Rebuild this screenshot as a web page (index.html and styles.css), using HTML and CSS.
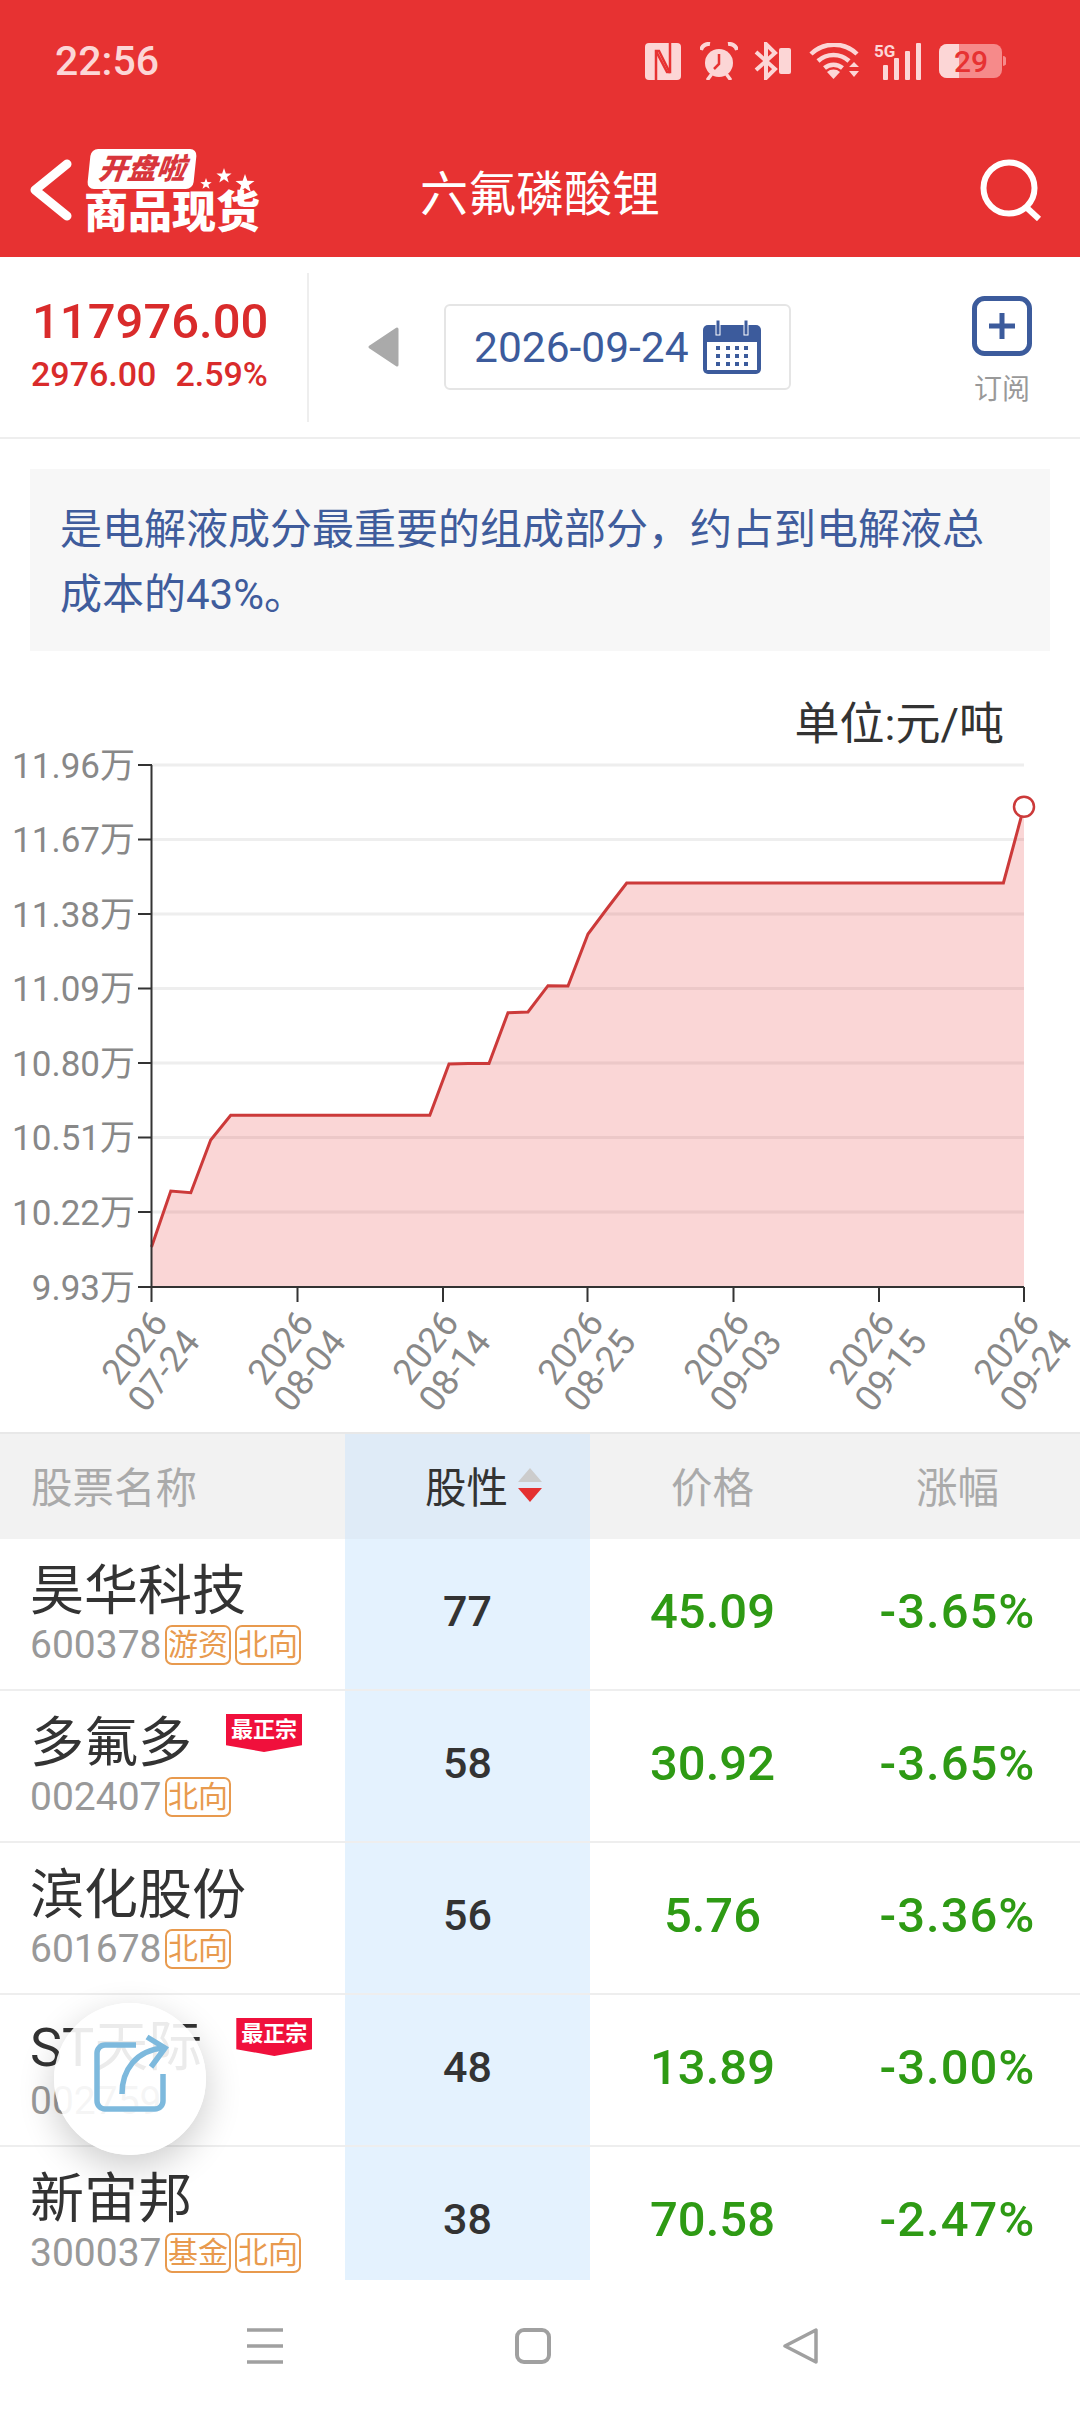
FILE: index.html
```html
<!DOCTYPE html>
<html lang="zh-CN">
<head>
    <meta charset="UTF-8">
    <meta name="viewport" content="width=device-width, initial-scale=1.0">
    <title>六氟磷酸锂</title>
    <link rel="stylesheet" href="styles.css">
</head>
<body>
<div class="page">
    <header class="topbar">
        <div class="status">
            <span class="clock">22:56</span>
            <div class="status-icons">
                <!-- NFC -->
                <svg width="36" height="37" viewBox="0 0 36 37">
                    <rect width="36" height="37" rx="4" fill="#fcd6d6"/>
                    <path d="M11 37V8h3l11 22" fill="none" stroke="#e73232" stroke-width="2.500"/>
                    <path d="M25 0v29h-3L11 8" fill="none" stroke="#e73232" stroke-width="2.500"/>
                </svg>
                <!-- alarm -->
                <svg class="ic-alarm" width="38" height="38" viewBox="0 0 38 38">
                    <circle cx="19" cy="21" r="14" fill="#fcd6d6"/>
                    <path d="M19 12v10l-5 5" fill="none" stroke="#e73232" stroke-width="2.500"/>
                    <path d="M1 8a8 8 0 0 1 9-6M37 8a8 8 0 0 0-9-6" fill="none" stroke="#fcd6d6" stroke-width="4"/>
                    <path d="M8 37l3-4M30 37l-3-4" stroke="#fcd6d6" stroke-width="3.500" stroke-linecap="round"/>
                </svg>
                <!-- bluetooth -->
                <svg class="ic-bt" width="37" height="38" viewBox="0 0 37 38">
                    <path d="M2 10l19 17-9 9V2l9 9L2 28" fill="none" stroke="#fcd6d6" stroke-width="4"/>
                    <rect x="25" y="6" width="12" height="26" rx="2" fill="#fcd6d6"/>
                </svg>
                <!-- wifi -->
                <svg class="ic-wifi" width="52" height="36" viewBox="0 0 52 36">
                    <path d="M2 11a33 33 0 0 1 46 0" fill="none" stroke="#fcd6d6" stroke-width="4.500"/>
                    <path d="M9 18a23 23 0 0 1 31 0" fill="none" stroke="#fcd6d6" stroke-width="4.500"/>
                    <path d="M15.500 25a14 14 0 0 1 18 0" fill="none" stroke="#fcd6d6" stroke-width="4.500"/>
                    <path d="M18 29a10 10 0 0 1 13 0l-6.500 7z" fill="#fcd6d6"/>
                    <path d="M40 24l5-5 5 5zM40 28h10l-5 6z" fill="#fcd6d6"/>
                </svg>
                <!-- signal -->
                <svg class="ic-signal" width="48" height="38" viewBox="0 0 48 38">
                    <text class="ic-text" x="0" y="15" font-size="17">5G</text>
                    <rect x="9" y="23" width="5" height="15" rx="1" fill="#fcd6d6"/>
                    <rect x="20" y="16" width="5" height="22" rx="1" fill="#fcd6d6"/>
                    <rect x="31" y="9" width="5" height="29" rx="1" fill="#fcd6d6"/>
                    <rect x="42" y="1" width="5" height="37" rx="1" fill="#fcd6d6"/>
                </svg>
                <!-- battery -->
                <svg class="ic-batt" width="67" height="34" viewBox="0 0 67 34">
                    <rect width="63" height="34" rx="8" fill="#f68a8a"/>
                    <path d="M8 0h12v34H8a8 8 0 0 1-8-8V8a8 8 0 0 1 8-8z" fill="#fcd6d6"/>
                    <path d="M64 12a4 5 0 0 1 0 10z" fill="#f68a8a"/>
                    <text class="ic-num" x="32" y="28" font-size="30" text-anchor="middle">29</text>
                </svg>
            </div>
        </div>
        <nav class="nav">
            <div class="nav-left">
                <svg class="nav-back" width="42" height="62" viewBox="0 0 42 62">
                    <path d="M37 5L5 31l32 26" fill="none" stroke="#fff" stroke-width="9" stroke-linecap="round" stroke-linejoin="round"/>
                </svg>
                <div class="logo">
                    <span class="logo-top"><span class="logo-top-text">开盘啦</span></span>
                    <span class="logo-bottom">商品现货</span>
                    <svg class="logo-stars" width="56" height="32" viewBox="0 0 56 32">
                        <path d="M0-1L.235-.324.951-.309.38.124.588.809 0 .4-.588.809-.38.124-.951-.309-.235-.324Z" transform="translate(6 19) scale(6)" fill="#fff"/>
                        <path d="M0-1L.235-.324.951-.309.38.124.588.809 0 .4-.588.809-.38.124-.951-.309-.235-.324Z" transform="translate(24 11) scale(8)" fill="#fff"/>
                        <path d="M0-1L.235-.324.951-.309.38.124.588.809 0 .4-.588.809-.38.124-.951-.309-.235-.324Z" transform="translate(45 19) scale(10)" fill="#fff"/>
                    </svg>
                </div>
            </div>
            <h1 class="nav-title">六氟磷酸锂</h1>
            <svg class="nav-search" width="62" height="62" viewBox="0 0 62 62">
                <circle cx="29" cy="29" r="25.500" fill="none" stroke="#fff" stroke-width="6"/>
                <path d="M46 48l13 12" stroke="#fff" stroke-width="6"/>
            </svg>
        </nav>
    </header>

    <section class="quote">
        <div class="quote-price">
            <div class="quote-now">117976.00</div>
            <div class="quote-diff"><span>2976.00</span><span>2.59%</span></div>
        </div>
        <svg class="date-prev" width="31" height="40" viewBox="0 0 31 40">
            <path d="M29 2v36L2 20z" fill="#aaa" stroke="#aaa" stroke-width="3" stroke-linejoin="round"/>
        </svg>
        <div class="date-box">
            <span class="date-text">2026-09-24</span>
            <svg width="58" height="54" viewBox="0 0 58 54">
                <rect y="5" width="58" height="49" rx="5" fill="#3c5b9c"/>
                <rect x="4" y="22" width="50" height="28" fill="#fff"/>
                <rect x="13" y="0" width="4" height="15" fill="#3c5b9c" stroke="#fff" stroke-width="1"/>
                <rect x="41" y="0" width="4" height="15" fill="#3c5b9c" stroke="#fff" stroke-width="1"/>
                <path d="M13 26h4v4h-4zM23 26h4v4h-4zM32 26h4v4h-4zM41 26h4v4h-4zM13 34h4v4h-4zM23 34h4v4h-4zM32 34h4v4h-4zM41 34h4v4h-4zM13 42h4v4h-4zM23 42h4v4h-4zM32 42h4v4h-4zM41 42h4v4h-4z" fill="#3c5b9c"/>
            </svg>
        </div>
        <div class="subscribe">
            <svg width="60" height="60" viewBox="0 0 60 60">
                <rect x="2.500" y="2.500" width="55" height="55" rx="10" fill="none" stroke="#3c5b9c" stroke-width="5"/>
                <path d="M30 17v26M17 30h26" stroke="#3c5b9c" stroke-width="5"/>
            </svg>
            <span>订阅</span>
        </div>
    </section>

    <p class="note">是电解液成分最重要的组成部分，约占到电解液总成本的43%。</p>

    <div class="unit">单位:元/吨</div>

    <svg class="chart" width="1080" height="691" viewBox="0 741 1080 691">
        <g class="grid">
            <path d="M152 765H1024M152 839.500H1024M152 914H1024M152 988.500H1024M152 1063H1024M152 1137.500H1024M152 1212H1024"/>
        </g>
        <path class="area" d="M151.500 1247L170.800 1191L190.800 1192.700L210.700 1140L230.700 1115.300L429.800 1115.300L449 1064L468 1063.500L489 1063.500L508 1012.700L528 1012L548 985.700L568 986L588 934L607.500 908L626.700 883L1003.400 883L1024 806.700V1287H151.500Z"/>
        <path class="line" d="M151.500 1247L170.800 1191L190.800 1192.700L210.700 1140L230.700 1115.300L429.800 1115.300L449 1064L468 1063.500L489 1063.500L508 1012.700L528 1012L548 985.700L568 986L588 934L607.500 908L626.700 883L1003.400 883L1024 806.700"/>
        <circle class="dot" cx="1024" cy="806.700" r="10"/>
        <path class="axis" d="M151.500 765V1302M138 765h14M138 839.500h14M138 914h14M138 988.500h14M138 1063h14M138 1137.500h14M138 1212h14M138 1287H1024M297.500 1287v15M443 1287v15M587.500 1287v15M733.500 1287v15M879 1287v15M1024 1287v15"/>
        <g class="y-labels">
            <text x="135" y="778">11.96万</text>
            <text x="135" y="852">11.67万</text>
            <text x="135" y="927">11.38万</text>
            <text x="135" y="1001">11.09万</text>
            <text x="135" y="1076">10.80万</text>
            <text x="135" y="1150">10.51万</text>
            <text x="135" y="1225">10.22万</text>
            <text x="135" y="1300">9.93万</text>
        </g>
        <g class="x-labels">
            <g transform="translate(149 1359) rotate(-52)"><text y="-6">2026</text><text y="31">07-24</text></g>
            <g transform="translate(295 1359) rotate(-52)"><text y="-6">2026</text><text y="31">08-04</text></g>
            <g transform="translate(440 1359) rotate(-52)"><text y="-6">2026</text><text y="31">08-14</text></g>
            <g transform="translate(585 1359) rotate(-52)"><text y="-6">2026</text><text y="31">08-25</text></g>
            <g transform="translate(731 1359) rotate(-52)"><text y="-6">2026</text><text y="31">09-03</text></g>
            <g transform="translate(876 1359) rotate(-52)"><text y="-6">2026</text><text y="31">09-15</text></g>
            <g transform="translate(1021 1359) rotate(-52)"><text y="-6">2026</text><text y="31">09-24</text></g>
        </g>
    </svg>

    <section class="table">
        <div class="thead">
            <div class="th th-name">股票名称</div>
            <div class="th th-sort">股性
                <svg width="24" height="34" viewBox="0 0 24 34">
                    <path d="M12 0l12 14H0z" fill="#ccc"/>
                    <path d="M0 20h24L12 34z" fill="#e43030"/>
                </svg>
            </div>
            <div class="th">价格</div>
            <div class="th">涨幅</div>
        </div>

        <div class="row">
            <div class="cell-name">
                <div class="name-line"><span class="name">昊华科技</span></div>
                <div class="code-line"><span class="code">600378</span><span class="tag">游资</span><span class="tag">北向</span></div>
            </div>
            <div class="cell-score">77</div>
            <div class="cell-num">45.09</div>
            <div class="cell-num cell-pct">-3.65%</div>
        </div>
        <div class="row">
            <div class="cell-name">
                <div class="name-line"><span class="name">多氟多</span><span class="badge">最正宗</span></div>
                <div class="code-line"><span class="code">002407</span><span class="tag">北向</span></div>
            </div>
            <div class="cell-score">58</div>
            <div class="cell-num">30.92</div>
            <div class="cell-num cell-pct">-3.65%</div>
        </div>
        <div class="row">
            <div class="cell-name">
                <div class="name-line"><span class="name">滨化股份</span></div>
                <div class="code-line"><span class="code">601678</span><span class="tag">北向</span></div>
            </div>
            <div class="cell-score">56</div>
            <div class="cell-num">5.76</div>
            <div class="cell-num cell-pct">-3.36%</div>
        </div>
        <div class="row">
            <div class="cell-name">
                <div class="name-line"><span class="name">ST天际</span><span class="badge">最正宗</span></div>
                <div class="code-line"><span class="code">002759</span></div>
            </div>
            <div class="cell-score">48</div>
            <div class="cell-num">13.89</div>
            <div class="cell-num cell-pct">-3.00%</div>
        </div>
        <div class="row">
            <div class="cell-name">
                <div class="name-line"><span class="name">新宙邦</span></div>
                <div class="code-line"><span class="code">300037</span><span class="tag">基金</span><span class="tag">北向</span></div>
            </div>
            <div class="cell-score">38</div>
            <div class="cell-num">70.58</div>
            <div class="cell-num cell-pct">-2.47%</div>
        </div>
    </section>

    <div class="sysbar">
        <svg width="36" height="36" viewBox="0 0 36 36">
            <path d="M0 2h36M0 18h36M0 34h36" stroke="#a0a0a0" stroke-width="3.500"/>
        </svg>
        <svg width="36" height="36" viewBox="0 0 36 36">
            <rect x="2" y="2" width="32" height="32" rx="7" fill="none" stroke="#a0a0a0" stroke-width="4"/>
        </svg>
        <svg width="36" height="36" viewBox="0 0 36 36">
            <path d="M2 18L33 2v32z" fill="none" stroke="#a0a0a0" stroke-width="3.500" stroke-linejoin="round"/>
        </svg>
    </div>

    <div class="share">
        <svg width="80" height="80" viewBox="0 0 80 80">
            <path d="M46 13H15a8 8 0 0 0-8 8v48a8 8 0 0 0 8 8h50a8 8 0 0 0 8-8V42" fill="none" stroke="#7db9dd" stroke-width="5.500"/>
            <path d="M32 62C32 38 46 18 74 16" fill="none" stroke="#7db9dd" stroke-width="5.500"/>
            <path d="M57 5l18 11-14 19" fill="none" stroke="#7db9dd" stroke-width="5.500"/>
        </svg>
    </div>
</div>
</body>
</html>
```

FILE: styles.css
```css
* {
    box-sizing: border-box;
}
body {
    margin: 0;
    font-family: Roboto, "Noto Sans CJK SC", sans-serif;
    background: #fff;
}
.page {
    position: relative;
    width: 1080px;
    height: 2412px;
    overflow: hidden;
    display: flex;
    flex-direction: column;
}

/* red header */
.topbar {
    height: 257px;
    background: #e73232;
    flex-shrink: 0;
}
.status {
    height: 122px;
    padding: 0 74px 0 55px;
    display: flex;
    align-items: center;
    justify-content: space-between;
}
.clock {
    font-size: 41px;
    font-weight: 500;
    color: #fcd6d6;
}
.status-icons {
    display: flex;
    align-items: center;
}
.ic-alarm {
    margin-left: 19px;
}
.ic-bt {
    margin-left: 16px;
}
.ic-wifi {
    margin-left: 18px;
}
.ic-signal {
    margin-left: 13px;
}
.ic-batt {
    margin-left: 17px;
}
.ic-text {
    font-family: Roboto, sans-serif;
    font-weight: 700;
    fill: #fcd6d6;
}
.ic-num {
    font-family: Roboto, sans-serif;
    font-weight: 500;
    fill: #e73232;
}
.nav {
    height: 135px;
    padding: 0 38px;
    display: grid;
    grid-template-columns: 1fr auto 1fr;
    align-items: center;
}
.nav-left {
    display: flex;
    align-items: center;
}
.nav-back {
    margin-left: -8px;
}
.logo {
    position: relative;
    margin-left: 12px;
    display: flex;
    flex-direction: column;
    align-items: flex-start;
}
.logo-top {
    margin-left: 5px;
    width: 106px;
    height: 40px;
    background: #fff;
    border-radius: 7px;
    transform: skewX(-6deg);
    display: flex;
    align-items: center;
    justify-content: center;
}
.logo-top-text {
    font-size: 29px;
    line-height: 40px;
    font-weight: 900;
    font-style: italic;
    color: #d8363c;
}
.logo-bottom {
    margin-top: 6px;
    font-size: 44px;
    line-height: 36px;
    font-weight: 900;
    color: #fff;
    white-space: nowrap;
}
.logo-stars {
    position: absolute;
    left: 116px;
    top: 16px;
}
.nav-title {
    margin: 0;
    font-size: 48px;
    font-weight: 400;
    color: #fff;
}
.nav-search {
    justify-self: end;
}

/* price and date row */
.quote {
    height: 182px;
    flex-shrink: 0;
    display: flex;
    align-items: center;
    border-bottom: 2px solid #eee;
}
.quote-price {
    width: 309px;
    height: 149px;
    padding: 24px 0 0 31px;
    border-right: 2px solid #eee;
    color: #d92b2b;
}
.quote-now {
    font-size: 49px;
    line-height: 50px;
    font-weight: 500;
    padding-left: 1px;
}
.quote-diff {
    margin-top: 7px;
    font-size: 34px;
    line-height: 40px;
    font-weight: 500;
    display: flex;
    gap: 19px;
}
.date-prev {
    margin-left: 59px;
}
.date-box {
    margin-left: 45px;
    width: 347px;
    height: 86px;
    padding: 0 28px 0 28px;
    border: 2px solid #e5e5e5;
    border-radius: 6px;
    display: flex;
    align-items: center;
    justify-content: space-between;
}
.date-text {
    font-size: 42.500px;
    color: #3c5b9c;
}
.subscribe {
    margin-left: auto;
    padding: 7px 48px 0 0;
    display: flex;
    flex-direction: column;
    align-items: center;
    gap: 18px;
    font-size: 28px;
    line-height: 32px;
    color: #999;
}

/* description */
.note {
    margin: 30px 30px 0;
    height: 182px;
    padding: 28px 30px 0;
    background: #f7f7f7;
    font-size: 42px;
    line-height: 65px;
    color: #3f5c9c;
    flex-shrink: 0;
}
.unit {
    height: 90px;
    padding: 48px 76px 0 0;
    display: flex;
    align-items: center;
    justify-content: flex-end;
    font-size: 45px;
    color: #333;
    flex-shrink: 0;
}

/* chart */
.chart {
    display: block;
    flex-shrink: 0;
}
.grid path {
    fill: none;
    stroke: #eee;
    stroke-width: 3;
}
.area {
    fill: rgba(228, 50, 50, 0.2);
}
.line {
    fill: none;
    stroke: #cc3a3a;
    stroke-width: 3;
}
.dot {
    fill: #fff;
    stroke: #cc3a3a;
    stroke-width: 2.500;
}
.axis {
    fill: none;
    stroke: #333;
    stroke-width: 2;
}
.y-labels text {
    font-size: 35px;
    fill: #888;
    text-anchor: end;
}
.x-labels text {
    font-size: 36px;
    fill: #888;
    text-anchor: middle;
}

/* stock table */
.table {
    flex: 1;
    min-height: 0;
    overflow: hidden;
}
.thead {
    height: 107px;
    display: grid;
    grid-template-columns: 345px 245px 245px 245px;
    background: #f2f2f2;
    border-top: 2px solid #e8e8e8;
}
.th {
    display: flex;
    align-items: center;
    justify-content: center;
    padding-bottom: 3px;
    font-size: 41.500px;
    color: #aaa;
}
.th-name {
    justify-content: flex-start;
    padding-left: 31px;
}
.th-sort {
    gap: 10px;
    background: #dfebf7;
    color: #333;
    padding-left: 32px;
}
.row {
    height: 152px;
    display: grid;
    grid-template-columns: 345px 245px 245px 245px;
    border-bottom: 2px solid #eee;
}
.cell-name {
    padding: 23px 0 0 30px;
}
.name-line {
    display: flex;
    align-items: flex-start;
    height: 58px;
}
.name {
    font-size: 54px;
    line-height: 60px;
    color: #333;
    white-space: nowrap;
}
.badge {
    margin: 0 0 0 34px;
    width: 76px;
    height: 38px;
    padding-top: 3px;
    background: #f0103c;
    color: #fff;
    font-size: 22px;
    line-height: 26px;
    font-weight: 700;
    text-align: center;
    clip-path: polygon(0 0, 100% 0, 100% 82%, 50% 100%, 0 82%);
}
.code-line {
    margin-top: 5px;
    height: 40px;
    display: flex;
    align-items: center;
}
.code {
    width: 135px;
    font-size: 39px;
    color: #999;
}
.tag {
    width: 66px;
    height: 40px;
    margin-right: 4px;
    border: 2px solid #e89a4e;
    border-radius: 7px;
    font-size: 30px;
    line-height: 35px;
    text-align: center;
    color: #e89a4e;
}
.cell-score {
    background: #e4f2fe;
    display: flex;
    align-items: center;
    justify-content: center;
    padding-bottom: 6px;
    font-size: 43px;
    font-weight: 500;
    color: #333;
}
.cell-num {
    display: flex;
    align-items: center;
    justify-content: center;
    padding-bottom: 6px;
    font-size: 49px;
    font-weight: 500;
    color: #2e9a14;
}
.cell-pct {
    letter-spacing: 1px;
}

/* android nav bar */
.sysbar {
    height: 132px;
    flex-shrink: 0;
    background: #fff;
    padding-left: 247px;
    display: flex;
    align-items: center;
    gap: 232px;
}

/* floating share button */
.share {
    position: absolute;
    left: 54px;
    top: 2003px;
    width: 152px;
    height: 152px;
    border-radius: 50%;
    background: rgba(255, 255, 255, 0.9);
    box-shadow: 0 12px 36px rgba(0, 0, 0, 0.2);
    padding: 29px 0 0 36px;
}
```
